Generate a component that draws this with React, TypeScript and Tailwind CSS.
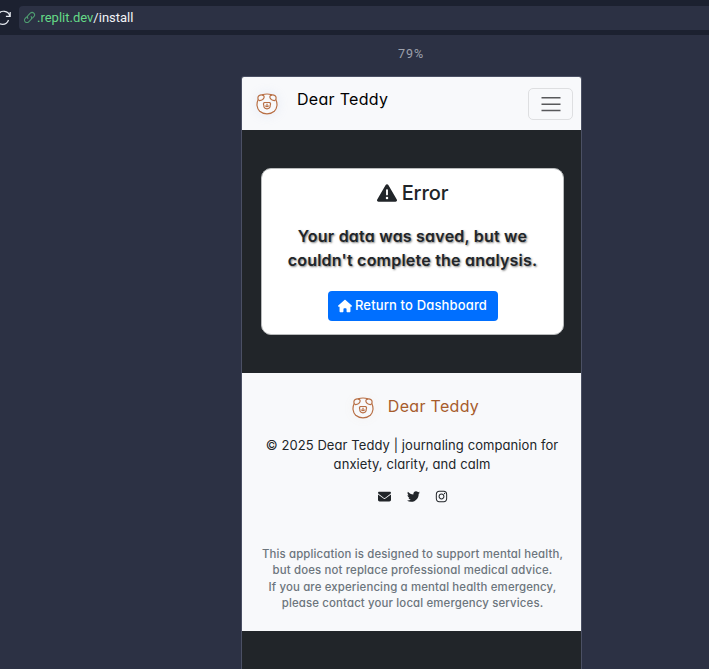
import React from "react";
import { FaTriangleExclamation, FaHouse, FaEnvelope, FaTwitter, FaInstagram } from "react-icons/fa6";

function Bear() {
  return (
    <svg viewBox="0 0 22 22" className="size-[22px] shrink-0" fill="none" stroke="#b86f45" strokeWidth="1.200">
      <path d="M6 1.900C9 .8 13 .8 16 1.900M2.200 6.500C.2 10.500.7 15.400 3.700 18.200c4 3.500 10.600 3.500 14.600 0 3-2.800 3.500-7.700 1.500-11.700" />
      <path d="M2.200 6.500c-.8-2 0-4 1.900-4.400 2.600-.5 4.500.5 4 2.300-.5 1.800-2.300 3-4.600 3.200-.6-.2-1-.6-1.300-1.100ZM19.800 6.500c.8-2 0-4-1.900-4.400-2.600-.5-4.500.5-4 2.300.5 1.800 2.300 3 4.600 3.200.6-.2 1-.6 1.300-1.100Z" />
      <path d="M8.200 9.500h5.600c1 1 1 2 .4 3 .1 2-1.100 3.400-3.200 3.400s-3.300-1.400-3.200-3.400c-.6-1-.6-2 .4-3Z" />
      <path d="M11 10.800v3M9.300 12.600c.4 1.400 3 1.400 3.400 0" />
    </svg>
  );
}

export default function App() {
  return (
    <div className="flex h-[669px] w-[709px] flex-col overflow-hidden bg-[#2c3144] font-['Inter',sans-serif] text-[#212529] [font-feature-settings:'cv11']">
      <header className="flex h-[35px] shrink-0 items-center bg-[#1c2130]">
        <svg viewBox="0 0 16 16" className="-ml-[5px] size-4 shrink-0" fill="none" stroke="#e5e9ef" strokeWidth="1.200">
          <path d="M15.200 2v4.300h-4.300M14.800 6A6.300 6.300 0 0 0 3.200 4.500M1 13.500V9.800h3.700M1.500 10a6.300 6.300 0 0 0 12 0" />
        </svg>
        <div className="ml-2 flex h-6 flex-1 items-center rounded-l-[4px] bg-[#2c3144] pl-1">
          <svg viewBox="0 0 24 24" className="size-[13px] shrink-0" fill="none" stroke="#4f9d71" strokeWidth="2">
            <path d="M9.500 14.500a4.500 4.500 0 0 1 0-6.400l4-4a4.500 4.500 0 0 1 6.400 6.400l-3 3M14.500 9.500a4.500 4.500 0 0 1 0 6.400l-4 4a4.500 4.500 0 0 1-6.400-6.400l3-3" />
          </svg>
          <span className="ml-[1px] whitespace-nowrap font-['Roboto',sans-serif] text-[13px] leading-6 text-[#f2f4f8]">
            <span className="text-[#65d987]">.replit.dev</span>/install
          </span>
        </div>
      </header>
      <div className="h-[41px] shrink-0 pl-[398px] pt-[11px] font-['Roboto',sans-serif] text-[12.5px] leading-4 tracking-[1px] text-[#9da2ad]">79%</div>
      <main className="ml-[241px] flex w-[341px] flex-1 flex-col overflow-hidden rounded-t-[3px] border border-b-0 border-[#4b5064] bg-[#212529]">
        <nav className="flex h-[53px] shrink-0 items-center bg-[#f8f9fb] pl-[14px] pr-[8px]">
          <div className="rounded-full shadow-[0_0_12px_rgba(160,180,225,0.2)]"><Bear /></div>
          <span className="-mt-[10px] ml-[19px] whitespace-nowrap text-[16px] leading-6 tracking-[0.3px] text-black">Dear Teddy</span>
          <span className="ml-auto flex h-8 w-[45px] items-center justify-center rounded-[5px] border border-[#dedfe1]">
            <svg viewBox="0 0 20 16" className="h-4 w-5" stroke="#58595b" strokeWidth="1.500"><path d="M.5 1.800h19M.5 8.200h19M.5 14.500h19" /></svg>
          </span>
        </nav>
        <section className="flex h-[243px] shrink-0 flex-col px-[19px] pt-[38px]">
          <div className="flex h-[167px] w-[303px] flex-col items-center rounded-[10px] border border-[#b9bbbc] bg-white">
            <h1 className="mt-[12px] flex h-6 items-center gap-[5px] text-[20px] font-medium tracking-[-0.1px]"><FaTriangleExclamation className="size-5" /><span>Error</span></h1>
            <div className="mt-[19px] whitespace-nowrap text-center text-[16px] font-semibold leading-6 tracking-[0.22px] [text-shadow:1px_1px_2px_rgba(0,0,0,0.5)]">
              <p>Your data was saved, but we</p>
              <p>couldn't complete the analysis.</p>
            </div>
            <button className="mt-[19px] flex h-[30px] w-[170px] items-center justify-center gap-[3px] rounded-[4px] bg-[#006fff] text-[13px] font-medium tracking-[0.15px] text-white">
              <FaHouse className="size-[14px]" /><span className="whitespace-nowrap">Return to Dashboard</span>
            </button>
          </div>
        </section>
        <footer className="flex h-[258px] shrink-0 flex-col items-center bg-[#f8f9fb] pt-[21px]">
          <div className="flex h-6 items-center gap-[14px] pl-[8px] text-[#a75c2c]">
            <div className="mt-[3px] rounded-full shadow-[0_0_12px_rgba(190,145,115,0.06)]"><Bear /></div>
            <span className="whitespace-nowrap text-[16px] tracking-[0.3px]">Dear Teddy</span>
          </div>
          <div className="mt-[18px] whitespace-nowrap pl-px text-center text-[13px] leading-[19px] tracking-[0.08px]">
            <p>© 2025 Dear Teddy | journaling companion for</p>
            <p>anxiety, clarity, and calm</p>
          </div>
          <div className="mt-[15px] flex h-[14px] items-center gap-[15.500px] pl-[3px]">
            <FaEnvelope className="size-[13px]" /><FaTwitter className="size-[13px]" /><FaInstagram className="size-[13px]" />
          </div>
          <div className="mt-[43px] whitespace-nowrap pl-[2px] text-center text-[11.400px] font-medium leading-[16.400px] tracking-[0.150px] text-[#6c757d]">
            <p>This application is designed to support mental health,</p>
            <p>but does not replace professional medical advice.</p>
            <p>If you are experiencing a mental health emergency,</p>
            <p>please contact your local emergency services.</p>
          </div>
        </footer>
      </main>
    </div>
  );
}
